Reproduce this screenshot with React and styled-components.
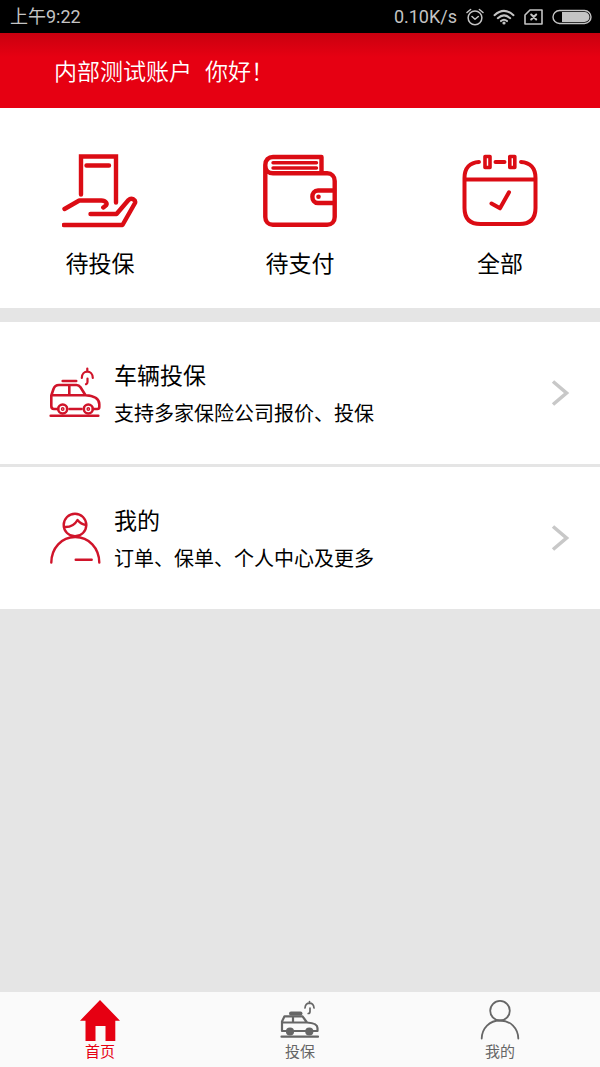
import styled, { createGlobalStyle } from "styled-components";

const GlobalStyle = createGlobalStyle`
  * {
    box-sizing: border-box;
  }
  body {
    margin: 0;
    background: #e5e5e5;
    font-family: Roboto, "Noto Sans CJK SC", sans-serif;
    color: #000;
  }
  a {
    color: inherit;
    text-decoration: none;
  }
  svg {
    display: block;
    flex: none;
  }
`;

const Page = styled.div`
  display: flex;
  flex-direction: column;
  min-height: 100vh;
`;

const StatusBar = styled.div`
  display: flex;
  align-items: center;
  justify-content: space-between;
  height: 33px;
  padding: 0 8px 0 10px;
  background: #000;
  color: #c4c4c4;
  font-size: 18px;
`;

const StatusGroup = styled.div`
  display: flex;
  align-items: center;
  gap: 9px;
`;

const Clock = styled.time`
  font-size: 18px;
  line-height: 26px;
`;

const Header = styled.header`
  display: flex;
  align-items: center;
  height: 75px;
  padding: 0 54px 2px;
  background: linear-gradient(#c9000f, #e60012 24px);
`;

const Greeting = styled.h1`
  display: flex;
  gap: 13px;
  margin: 0;
  color: #fff;
  font-family: "Noto Sans CJK SC", sans-serif;
  font-size: 23px;
  font-weight: 350;
  line-height: 34px;
`;

const QuickNav = styled.nav`
  display: grid;
  grid-template-columns: repeat(3, 1fr);
  height: 200px;
  background: #fff;
`;

const QuickLink = styled.a`
  display: flex;
  flex-direction: column;
  align-items: center;
  gap: 19px;
  padding-top: 45px;
  font-size: 23px;
  line-height: 34px;
`;

const MenuList = styled.main`
  display: flex;
  flex-direction: column;
  flex: 1;
  gap: 3px;
  padding-top: 14px;
`;

const MenuRow = styled.a`
  display: flex;
  align-items: center;
  gap: 13px;
  height: 142px;
  padding: 0 30px 0 49px;
  background: #fff;
`;

const MenuText = styled.div`
  flex: 1;
  padding-top: 3px;
`;

const MenuTitle = styled.h2`
  margin: 0 0 5px;
  font-size: 23px;
  font-weight: 400;
  line-height: 34px;
`;

const MenuHint = styled.p`
  margin: 0;
  font-size: 20px;
  line-height: 30px;
`;

const TabBar = styled.nav`
  display: grid;
  grid-template-columns: repeat(3, 1fr);
  height: 75px;
  background: #fafafa;
`;

const Tab = styled.a`
  display: flex;
  flex-direction: column;
  align-items: center;
  padding-top: 8px;
  color: ${(props) => (props.$active ? "#e60012" : "#666")};
  font-size: 15px;
  line-height: 22px;
`;

const Icon = styled.svg.attrs((props) => ({
  width: props.$width,
  height: props.$height,
  viewBox: `0 0 ${props.$width} ${props.$height}`,
  "aria-hidden": true,
}))`
  fill: none;
  stroke: ${(props) => props.$color || "currentColor"};
  stroke-width: ${(props) => props.$stroke || 2};
  stroke-linecap: round;
  stroke-linejoin: round;
`;

const AlarmIcon = () => (
  <Icon $width={18} $height={18} $stroke={1.5}>
    <circle cx="9" cy="9.8" r="6.9" />
    <path d="M6 8.5l3 2.8 3.3-2.8M1 4.5l3.6-3M17 4.5l-3.6-3" />
  </Icon>
);

const WifiIcon = () => (
  <Icon $width={22} $height={18} $stroke={2}>
    <path d="M1.5 7.2Q11 -1.4 20.5 7.2M4.8 10.2Q11 4.6 17.2 10.2M8 13.1Q11 10.4 14 13.1" />
    <circle cx="11" cy="15" r="1.6" fill="currentColor" stroke="none" />
  </Icon>
);

const NoSimIcon = () => (
  <Icon $width={19} $height={18} $stroke={1.6}>
    <path d="M6 2h12v14H1V7z" />
    <path d="M7.2 6.5l5 5M12.2 6.5l-5 5" strokeWidth="2" />
  </Icon>
);

const BatteryIcon = () => (
  <Icon $width={40} $height={16} $stroke={1.4}>
    <rect x="1" y="1.5" width="38" height="13" rx="6.5" />
    <path
      d="M10 3h22.5a5 5 0 0 1 0 10H10z"
      fill="currentColor"
      stroke="none"
    />
  </Icon>
);

const HandIcon = () => (
  <Icon $width={76} $height={76} $color="#db0c14" $stroke={4.4}>
    <path d="M19 41.5V3.5h35V49.5M24.500 12.500h22.500" strokeLinejoin="miter" />
    <path d="M2.500 56l14.800-8.500h22c4.500 0 7 3.500 4 5.500l-2 1.500M28.500 61h26l12-14c3-3 7.500 0 6.500 3L60.500 72H1.800" />
  </Icon>
);

const WalletIcon = () => (
  <Icon $width={76} $height={76} $color="#db0c14" $stroke={4.4}>
    <path d="M59.500 19V4H11C6.500 4 3.300 7 3.300 12v52c0 4.500 3 7.700 7.500 7.700h54.400c4.500 0 7.500-3.200 7.500-7.700V28c0-4.500-3-7.700-7.500-7.700H11c-4.500 0-7.700-3.300-7.700-7.700" />
    <path d="M11 9.700h43.500M11 15h43.500" strokeWidth="3.400" />
    <path d="M72 37.500H56c-7.500 0-7.500 12.500 0 12.500h16" />
    <circle cx="56.500" cy="43.700" r="2.300" fill="#db0c14" stroke="none" />
  </Icon>
);

const CalendarIcon = () => (
  <Icon $width={76} $height={76} $color="#db0c14" $stroke={4}>
    <path d="M17 9C8 9.500 2.500 15 2.500 25v30c0 11 6 16 16 16h39c10 0 16-5 16-16V25c0-10-5.500-15.500-14.500-16M33.500 9h9M2.500 26.500h71" />
    <path d="M23 3.500h5v11h-5zM47.800 3.500h5v11h-5z" strokeWidth="3.600" />
    <path d="M29.500 50.500l8.500 4.800 9-16" strokeWidth="4" />
  </Icon>
);

const CarIcon = () => (
  <Icon $width={52} $height={52} $color="#d0142a" $stroke={2.6}>
    <path d="M9 42H5c-2 0-2.700-1-2.700-3V28.500L4.500 22c1-3 2.500-4 5.500-4h17.500c2 0 3 .8 4 2.300l5 7.900c8 .5 13.800 3 13.800 9V40c0 1.500-.6 2-2 2H44M20.500 42h12M2.800 28.200h34M20.300 18v10M13.700 14h13.500M1.700 48.700h47.600" />
    <circle cx="13.700" cy="42" r="4.500" />
    <circle cx="39.300" cy="42" r="4.500" />
    <g strokeWidth="1.400">
      <circle cx="13.700" cy="42" r="1.200" />
      <circle cx="39.300" cy="42" r="1.200" />
    </g>
    <path
      d="M32.800 11c0-8.500 11-8.500 11 0M38.300 1.500v3M38.500 11.500v3.500c0 1.200-.6 1.800-1.500 2.200"
      strokeWidth="2.200"
    />
  </Icon>
);

const MemberIcon = () => (
  <Icon $width={52} $height={52} $color="#d0142a" $stroke={2.4}>
    <circle cx="26" cy="13" r="11.300" />
    <path d="M15 15c6 .5 11-2.500 13.500-7 2 2.500 5 4.500 8.500 5" />
    <path d="M2.300 50.500C2.500 36 12.500 25 26.200 25s23.900 11 24.100 25.500M26.700 47.700h16" />
  </Icon>
);

const ChevronIcon = () => (
  <Icon $width={20} $height={30} $color="#c8c8c8" $stroke={3.6}>
    <path d="M3 3.500L16.500 15 3 26.500" strokeLinecap="butt" strokeLinejoin="miter" />
  </Icon>
);

const HomeTabIcon = () => (
  <Icon $width={40} $height={41}>
    <path
      d="M20 0l20 20.700h-4.700V41H25.500V26h-10v15H5.500V20.700H0z"
      fill="currentColor"
      stroke="none"
    />
  </Icon>
);

const CarTabIcon = () => (
  <Icon $width={40} $height={41} $stroke={2.2}>
    <path d="M6 31H2V21.500l2.500-5.200h18l4.500 6.200c6 .3 10.500 1.500 10.500 5.500v3H33M14 31h11.500M2.500 22.500H27M13 16.500v6M1.500 36.700h36.500" />
    <path d="M11 13.500h9.500" strokeWidth="4" />
    <g fill="currentColor">
      <circle cx="10" cy="31.500" r="3" />
      <circle cx="29.300" cy="31.500" r="3" />
    </g>
    <path
      d="M25 8c.5-6.500 8.500-6.500 9 0M29.500 1.500v2M30 8v3.500c0 1.300-.7 2-1.800 2"
      strokeWidth="1.700"
    />
  </Icon>
);

const MineTabIcon = () => (
  <Icon $width={40} $height={41} $stroke={1.8}>
    <circle cx="20" cy="10.700" r="9.800" />
    <path d="M1.700 38.500C2 28 9.500 20.500 20 20.500S38 28 38.300 38.500" />
  </Icon>
);

const quickLinks = [
  { label: "待投保", icon: <HandIcon /> },
  { label: "待支付", icon: <WalletIcon /> },
  { label: "全部", icon: <CalendarIcon /> },
];

const menuRows = [
  {
    title: "车辆投保",
    hint: "支持多家保险公司报价、投保",
    icon: <CarIcon />,
  },
  {
    title: "我的",
    hint: "订单、保单、个人中心及更多",
    icon: <MemberIcon />,
  },
];

const tabs = [
  { label: "首页", icon: <HomeTabIcon />, active: true },
  { label: "投保", icon: <CarTabIcon /> },
  { label: "我的", icon: <MineTabIcon /> },
];

const App = () => {
  return (
    <Page>
      <GlobalStyle />
      <StatusBar>
        <Clock>上午9:22</Clock>
        <StatusGroup>
          <span>0.10K/s</span>
          <AlarmIcon />
          <WifiIcon />
          <NoSimIcon />
          <BatteryIcon />
        </StatusGroup>
      </StatusBar>
      <Header>
        <Greeting>
          <span>内部测试账户</span>
          <span>你好！</span>
        </Greeting>
      </Header>
      <QuickNav>
        {quickLinks.map((item) => (
          <QuickLink href="#" key={item.label}>
            {item.icon}
            {item.label}
          </QuickLink>
        ))}
      </QuickNav>
      <MenuList>
        {menuRows.map((row) => (
          <MenuRow href="#" key={row.title}>
            {row.icon}
            <MenuText>
              <MenuTitle>{row.title}</MenuTitle>
              <MenuHint>{row.hint}</MenuHint>
            </MenuText>
            <ChevronIcon />
          </MenuRow>
        ))}
      </MenuList>
      <TabBar>
        {tabs.map((tab) => (
          <Tab href="#" key={tab.label} $active={tab.active}>
            {tab.icon}
            {tab.label}
          </Tab>
        ))}
      </TabBar>
    </Page>
  );
};

export default App;
